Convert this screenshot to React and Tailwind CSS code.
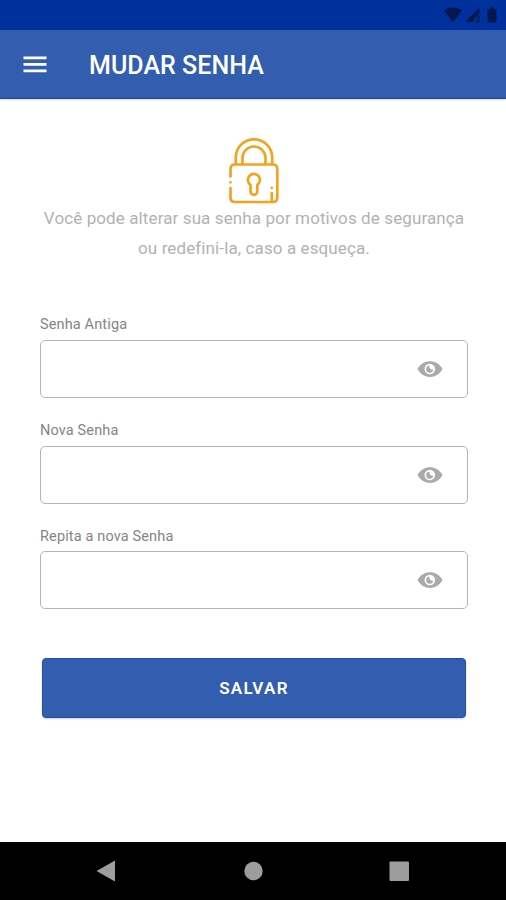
import { useState } from "react"

const fields = [
  { name: "oldPassword", label: "Senha Antiga" },
  { name: "newPassword", label: "Nova Senha" },
  { name: "confirmPassword", label: "Repita a nova Senha" },
]

const StatusBar = () => (
  <div className="h-[30px] shrink-0 bg-[#00309b] text-[#04184f]">
    <svg className="ml-auto block h-[30px] w-[70px]" viewBox="0 0 70 30" fill="currentColor">
      <path d="M8 10.5C13.500 6.500 20.500 6.500 26 10.500L17 22Z" />
      <path d="M29 22L43.500 7.500V13.500C40 13.500 39 16 39.500 18L36.500 22Z" />
      <path d="M40 16.500C41.500 14.500 44 16 43 18L40.500 21.500H44" fill="none" stroke="currentColor" strokeWidth="1.300" />
      <path d="M51.500 10.500Q51.500 9 53 9H54V7.500H58V9H59Q60.500 9 60.500 10.500V21Q60.500 22.500 59 22.500H53Q51.500 22.500 51.500 21Z" />
    </svg>
  </div>
)

const Header = () => (
  <header className="flex h-[69px] shrink-0 items-center border-b border-[#174a9f] bg-[#335dae] pt-[2px] pl-[23px] text-white shadow-[0_1px_2px_rgba(0,0,0,0.15)]">
    <button type="button" aria-label="Menu">
      <svg className="block h-[18px] w-[24px]" viewBox="0 0 24 18" fill="currentColor">
        <path d="M0.500 0.500h23v2.700h-23zM0.500 7h23v2.700h-23zM0.500 13.500h23v2.700h-23z" />
      </svg>
    </button>
    <h1 className="ml-[42px] pt-px text-[25px] font-medium tracking-[0.050px]">MUDAR SENHA</h1>
  </header>
)

const LockIcon = () => (
  <svg
    className="ml-[229px] block h-[66px] w-[50px]"
    viewBox="0 0 50 66"
    fill="none"
    stroke="#f0a420"
    strokeWidth="2.700"
    strokeLinecap="round"
    strokeLinejoin="round"
  >
    <path d="M6.800 26V19.500a18.200 18.200 0 0 1 36.400 0V26" />
    <path d="M13.500 26V20a11.500 11.500 0 0 1 23 0V26" />
    <path d="M1.500 38.500V31q0-4.500 4.500-4.500H43.800q4.500 0 4.500 4.500V59.500q0 4.500-4.500 4.500H6q-4.500 0-4.500-4.500V50" />
    <path d="M1.500 44.300h.01M42.800 49.800h.01M42.800 55V63.500" />
    <path d="M21.500 46.800a6 6 0 1 1 6.800 0V53.500a3.400 3.400 0 0 1-6.800 0Z" />
  </svg>
)

const EyeIcon = () => (
  <svg className="block h-[18px] w-[26px]" viewBox="0 0 26 18" fill="none">
    <path d="M.5 9C6-1.500 20-1.500 25.500 9C20 19.500 6 19.500 .5 9Z" fill="#aaa" />
    <circle cx="12.800" cy="9" r="5.300" fill="white" />
    <path d="M12.300 5.500A3.600 3.600 0 1 0 16.300 9.800Q12.300 10 12.300 5.500Z" fill="#aaa" />
  </svg>
)

const PasswordField = ({ field, value, onChange }) => {
  const [isVisible, setIsVisible] = useState(false)

  return (
    <div className="h-[105.700px]">
      <label htmlFor={field.name} className="block h-[24px] pt-[1.400px] text-[14.500px] leading-[16px] tracking-[0.140px] text-[#858585]">
        {field.label}
      </label>
      <div className="flex h-[58px] items-center rounded-[5px] border-[1.500px] border-[#b5b5b5] pr-[24px]">
        <input
          id={field.name}
          name={field.name}
          type={isVisible ? "text" : "password"}
          value={value}
          onChange={onChange}
          className="h-full min-w-0 flex-1 px-4 text-base outline-none"
        />
        <button type="button" aria-label="Mostrar senha" onClick={() => setIsVisible(!isVisible)}>
          <EyeIcon />
        </button>
      </div>
    </div>
  )
}

const NavigationBar = () => (
  <nav className="h-[58px] shrink-0 bg-black">
    <svg className="block h-[58px] w-full" viewBox="0 0 506 58" fill="#9d9d9d">
      <path d="M96.500 29L115 18.500V39.500Z" />
      <circle cx="253.500" cy="29" r="9.200" />
      <rect x="389.500" y="19.500" width="19.500" height="19.500" rx="1" />
    </svg>
  </nav>
)

const App = () => {
  const [formData, setFormData] = useState({
    oldPassword: "",
    newPassword: "",
    confirmPassword: "",
  })

  const handleChange = (e) => {
    setFormData({ ...formData, [e.target.name]: e.target.value })
  }

  return (
    <div className="flex h-[900px] w-[506px] flex-col overflow-hidden bg-white font-['Roboto',sans-serif]">
      <StatusBar />
      <Header />

      <main className="flex-1 pt-[39px]">
        <LockIcon />
        <p className="-mt-px pl-[2px] text-center text-[17px] leading-[30px] tracking-[0.110px] text-[#b2b2b2]">
          Você pode alterar sua senha por motivos de segurança
          <br />
          ou redefini-la, caso a esqueça.
        </p>

        <form className="mt-[53px] pr-[38px] pl-[40px]" onSubmit={(e) => e.preventDefault()}>
          {fields.map((field) => (
            <PasswordField key={field.name} field={field} value={formData[field.name]} onChange={handleChange} />
          ))}

          {/* Submit Button */}
          <button
            type="submit"
            className="mt-[25px] ml-[2px] block h-[60px] w-[424px] rounded-[4px] border border-[#1f51a5] bg-[#335dae] pt-px text-[17px] font-semibold tracking-[1.300px] text-white shadow-[0_1px_2px_rgba(0,0,0,0.2)]"
          >
            SALVAR
          </button>
        </form>
      </main>

      <NavigationBar />
    </div>
  )
}

export default App
